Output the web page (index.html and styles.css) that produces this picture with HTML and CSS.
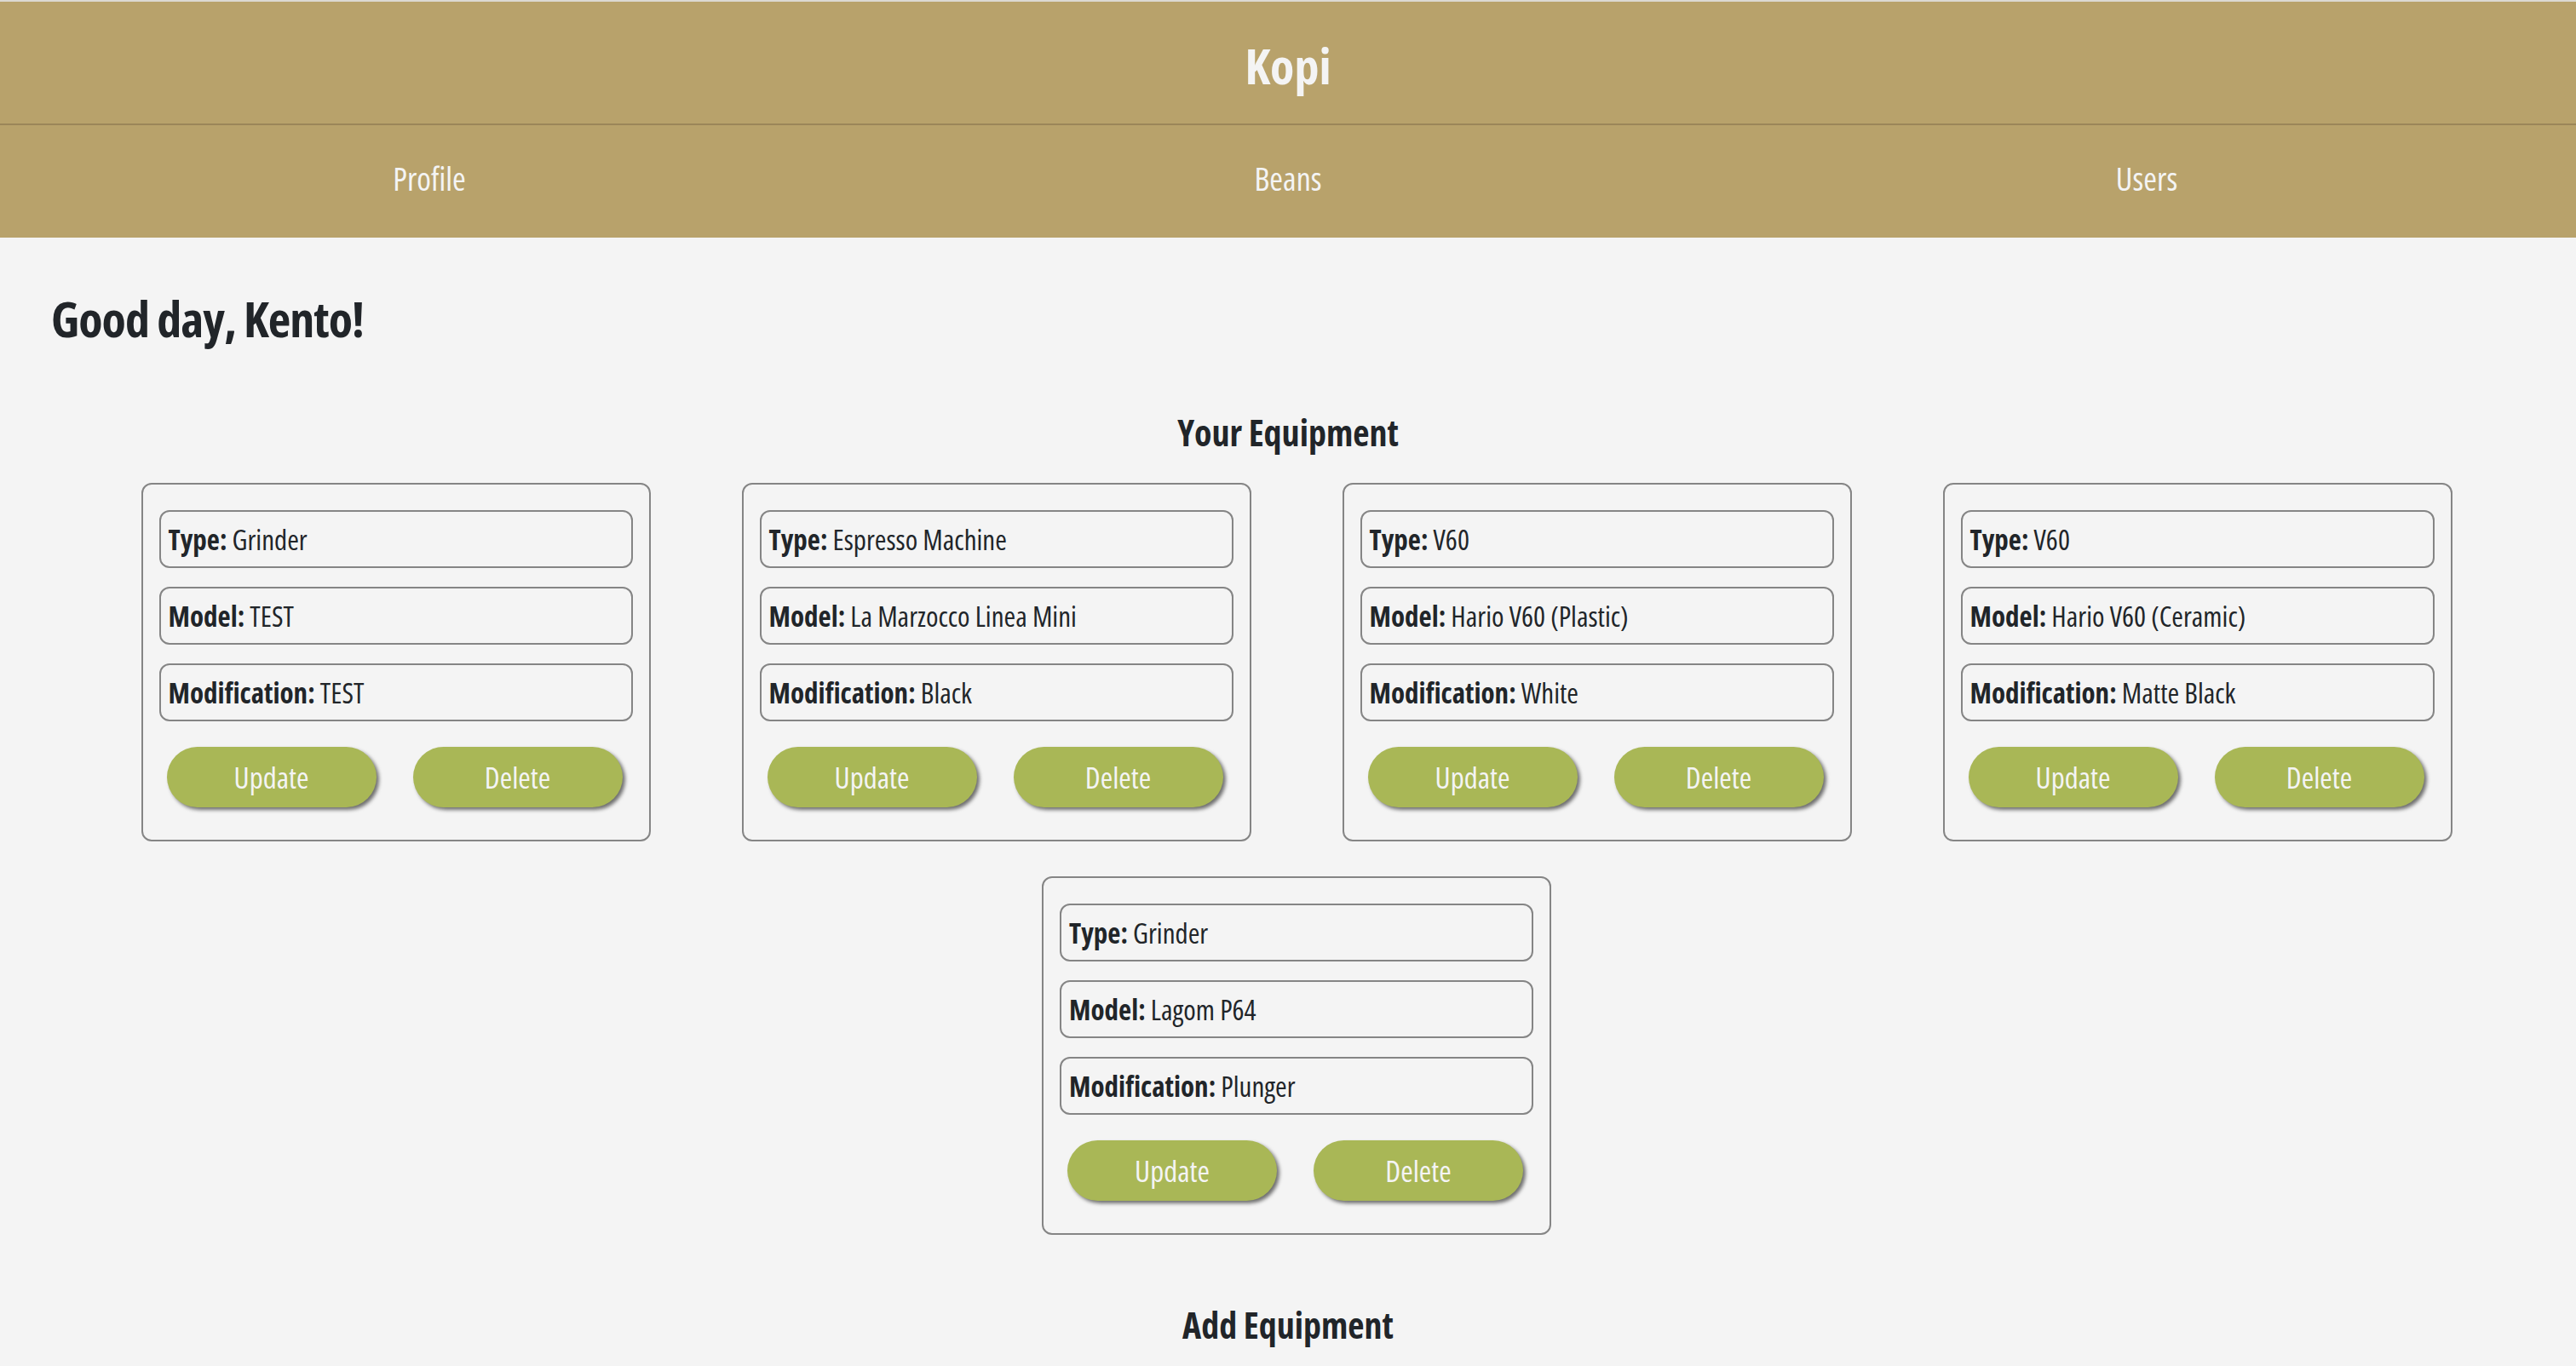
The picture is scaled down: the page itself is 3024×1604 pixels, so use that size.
FILE: index.html
```html
<!DOCTYPE html>
<html lang="en">
<head>
<meta charset="utf-8">
<title>Kopi</title>
<link rel="stylesheet" href="styles.css">
</head>
<body>
<header class="topbar">
  <div class="brand">Kopi</div>
</header>
<nav class="nav">
  <a class="nav-link" href="#">Profile</a>
  <a class="nav-link" href="#">Beans</a>
  <a class="nav-link" href="#">Users</a>
</nav>
<main class="content">
  <h1 class="greeting">Good day, Kento!</h1>
  <h2 class="section-title">Your Equipment</h2>
  <div class="equipment-list">
    <div class="card">
      <div class="field"><b>Type:</b> Grinder</div>
      <div class="field"><b>Model:</b> TEST</div>
      <div class="field"><b>Modification:</b> TEST</div>
      <div class="actions"><button class="btn">Update</button><button class="btn">Delete</button></div>
    </div>
    <div class="card">
      <div class="field"><b>Type:</b> Espresso Machine</div>
      <div class="field"><b>Model:</b> La Marzocco Linea Mini</div>
      <div class="field"><b>Modification:</b> Black</div>
      <div class="actions"><button class="btn">Update</button><button class="btn">Delete</button></div>
    </div>
    <div class="card">
      <div class="field"><b>Type:</b> V60</div>
      <div class="field"><b>Model:</b> Hario V60 (Plastic)</div>
      <div class="field"><b>Modification:</b> White</div>
      <div class="actions"><button class="btn">Update</button><button class="btn">Delete</button></div>
    </div>
    <div class="card">
      <div class="field"><b>Type:</b> V60</div>
      <div class="field"><b>Model:</b> Hario V60 (Ceramic)</div>
      <div class="field"><b>Modification:</b> Matte Black</div>
      <div class="actions"><button class="btn">Update</button><button class="btn">Delete</button></div>
    </div>
    <div class="card">
      <div class="field"><b>Type:</b> Grinder</div>
      <div class="field"><b>Model:</b> Lagom P64</div>
      <div class="field"><b>Modification:</b> Plunger</div>
      <div class="actions"><button class="btn">Update</button><button class="btn">Delete</button></div>
    </div>
  </div>
  <h2 class="section-title add-title">Add Equipment</h2>
</main>
</body>
</html>
```
FILE: styles.css
```css
html, body {
  margin: 0;
  padding: 0;
}

body {
  background: #f4f4f4;
  color: #212529;
  font-family: "Open Sans", "DejaVu Sans Condensed", sans-serif;
  font-stretch: 75%;
  border-top: 2px solid #dcd9d2;
}

.topbar {
  background: #b8a26b;
  height: 143px;
  display: flex;
  align-items: center;
  justify-content: center;
  border-bottom: 2px solid #9b8659;
}

.brand {
  color: #f4f4f4;
  font-size: 58px;
  font-weight: bold;
  line-height: 1;
  margin-top: 6px;
}

.nav {
  background: #b8a26b;
  height: 132px;
  display: grid;
  grid-template-columns: 1fr 1fr 1fr;
  align-items: center;
}

.nav-link {
  color: #f4f4f4;
  text-decoration: none;
  text-align: center;
  font-size: 38px;
  line-height: 1;
  margin-bottom: 9px;
}

.content {
  padding: 0;
}

.greeting {
  margin: 55px 0 0 0;
  padding-left: 60px;
  font-size: 58px;
  line-height: 80px;
  font-weight: bold;
  letter-spacing: -1px;
}

.section-title {
  text-align: center;
  font-size: 42px;
  line-height: 56px;
  font-weight: bold;
  margin: 66px 0 31px 0;
}

.add-title {
  margin-top: 78px;
}

.equipment-list {
  display: flex;
  flex-wrap: wrap;
  justify-content: center;
  column-gap: 107px;
  row-gap: 41px;
  padding-left: 20px;
}

.card {
  box-sizing: border-box;
  width: 598px;
  border: 2px solid #858585;
  border-radius: 12px;
  padding: 30px 19px 38px 19px;
  display: flex;
  flex-direction: column;
  gap: 22px;
}

.field {
  box-sizing: border-box;
  height: 68px;
  border: 2px solid #858585;
  border-radius: 12px;
  padding: 0 9px;
  display: flex;
  align-items: center;
  font-size: 33px;
  white-space: pre;
}

.field b {
  font-weight: bold;
}

.actions {
  display: flex;
  gap: 43px;
  padding-left: 9px;
  margin-top: 8px;
}

.btn {
  width: 246px;
  height: 71px;
  border: none;
  border-radius: 36px;
  background: #a9b756;
  color: #f4f4f4;
  font-family: inherit;
  font-stretch: 75%;
  font-size: 35px;
  box-shadow: 3px 3px 4px rgba(0, 0, 0, 0.55);
  padding: 0;
}
```
